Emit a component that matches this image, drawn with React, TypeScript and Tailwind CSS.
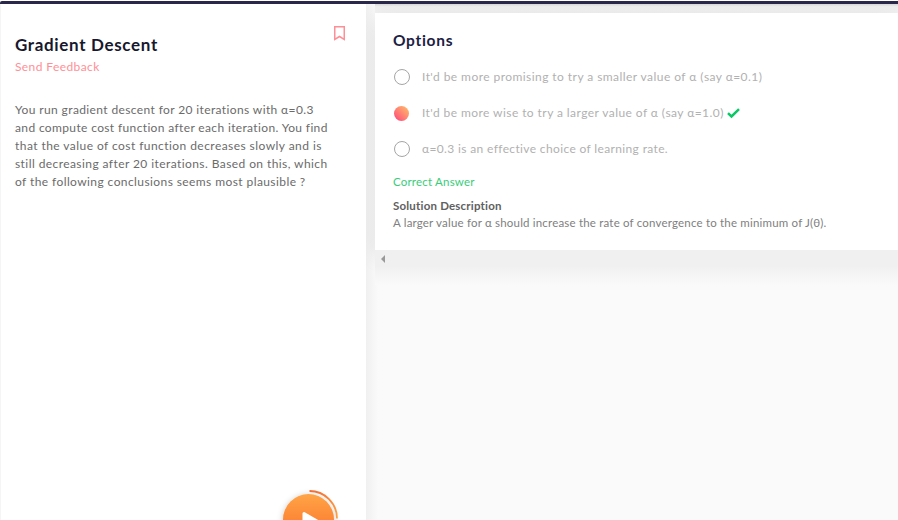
const question = [
  { text: 'You run gradient descent for 20 iterations with α=0.3', tracking: 'tracking-[0.38px]' },
  { text: 'and compute cost function after each iteration. You find', tracking: 'tracking-[0.36px]' },
  { text: 'that the value of cost function decreases slowly and is', tracking: 'tracking-[0.44px]' },
  { text: 'still decreasing after 20 iterations. Based on this, which', tracking: 'tracking-[0.42px]' },
  { text: 'of the following conclusions seems most plausible ?', tracking: 'tracking-[0.41px]' },
];

const options = [
  { text: "It'd be more promising to try a smaller value of α (say α=0.1)", selected: false, tracking: 'tracking-[0.44px]' },
  { text: "It'd be more wise to try a larger value of α (say α=1.0)", selected: true, tracking: 'tracking-[0.43px]' },
  { text: 'α=0.3 is an effective choice of learning rate.', selected: false, tracking: 'tracking-[0.36px]' },
];

function Radio({ selected }: { selected: boolean }) {
  return selected ? (
    <span className="mr-px h-[15px] w-[15px] rounded-full bg-linear-to-tr from-[#ff2f78] to-[#ffbf65]" />
  ) : (
    <span className="h-4 w-4 rounded-full border border-[#a5a5a5]" />
  );
}

function PlayButton() {
  return (
    <div className="absolute bottom-0 left-[273px] z-30 h-[40px] w-[76px] overflow-hidden">
      <svg width="76" height="80" viewBox="0 0 76 80" fill="none">
        <defs>
          <linearGradient id="play" x1="0" y1="0" x2="0" y2="1">
            <stop stopColor="#ffa447" />
            <stop offset="1" stopColor="#fb6b25" />
          </linearGradient>
          <linearGradient id="arc" x1="0" y1="0" x2="1" y2="1">
            <stop stopColor="#f26b35" />
            <stop offset="1" stopColor="#ffa040" />
          </linearGradient>
          <filter id="shadow" x="-30%" y="-30%" width="160%" height="160%">
            <feDropShadow dx="0" dy="1" stdDeviation="3" floodOpacity="0.22" />
          </filter>
        </defs>
        <circle cx="35.5" cy="39.5" r="25.5" fill="url(#play)" filter="url(#shadow)" />
        <path d="M36.5 11A27.5 27.5 0 0 1 64 38.5" stroke="url(#arc)" strokeWidth="1.8" />
        <path d="M31 33.5L44 41L31 48.5Z" fill="white" stroke="white" strokeWidth="3" strokeLinejoin="round" />
      </svg>
    </div>
  );
}

export default function App() {
  return (
    <div className="relative flex h-[520px] w-[898px] flex-col overflow-hidden bg-white font-[Lato,'Liberation_Sans',sans-serif]">
      <div className="z-30 mt-px h-[3px] shrink-0 rounded-tl-xs bg-[#29284a]" />
      <main className="flex flex-1">
        <section className="z-20 w-[366px] shrink-0 border-l border-[#f5f5f5] bg-white pl-[14px]">
          <div className="flex h-[84px] justify-between pr-[20px] pt-[22px]">
            <div>
              <h1 className="h-[30px] text-[17px] font-bold leading-[38px] tracking-[0.66px] text-[#17182d]">Gradient Descent</h1>
              <a className="block text-[12px] leading-[22px] tracking-[0.4px] text-[#ff8f96]">Send Feedback</a>
            </div>
            <svg className="block" width="13" height="16" viewBox="0 0 13 16" fill="none">
              <path d="M1.75 .75H11.25V13.5L6.5 10.5L1.75 13.5Z" stroke="#ff8f96" strokeWidth="1.5" />
            </svg>
          </div>
          <div className="pt-[13px] text-[12px] leading-[18px] text-[#6b6b6b]">
            {question.map((line) => (
              <p key={line.text} className={`whitespace-nowrap ${line.tracking}`}>{line.text}</p>
            ))}
          </div>
        </section>
        <section className="flex flex-1 flex-col bg-linear-to-r from-[#f0f0f0] to-[#fafafa] to-[12px] pl-[9px]">
          <div className="h-[9px] shrink-0 bg-linear-to-b from-[#d8d8d8] via-[#efefef] via-30% to-[#f2f2f2]" />
          <div className="h-[237px] shrink-0 bg-white pl-[18px] shadow-[0_6px_20px_rgba(0,0,0,0.1)]">
            <h2 className="pt-[16px] text-[15.5px] font-bold leading-[22px] tracking-[0.7px] text-[#1c2143]">Options</h2>
            <div className="pt-[8px]">
              {options.map((o) => (
                <div key={o.text} className="flex h-9 items-center">
                  <span className="flex w-[18px] justify-center"><Radio selected={o.selected} /></span>
                  <span className={`ml-[11px] whitespace-nowrap text-[12px] leading-[18px] text-[#b1b1b1] ${o.tracking}`}>{o.text}</span>
                  {o.selected && (
                    <svg className="ml-[3px]" width="13" height="11" viewBox="0 0 13 11" fill="none">
                      <path d="M1 5.2L4.5 8.5L12 1.2" stroke="#09c865" strokeWidth="2.5" />
                    </svg>
                  )}
                </div>
              ))}
            </div>
            <p className="pt-[6px] text-[11.5px] leading-[18px] tracking-[0.2px] text-[#38cd78]">Correct Answer</p>
            <h3 className="pt-[6px] text-[11.5px] font-bold leading-[18px] tracking-[0.2px] text-[#606060]">Solution Description</h3>
            <p className="whitespace-nowrap text-[11.5px] leading-[16px] tracking-[0.19px] text-[#808080]">A larger value for α should increase the rate of convergence to the minimum of J(θ).</p>
          </div>
          <div className="z-10 flex h-[17px] shrink-0 items-center bg-[#f0f0f0] pl-[6px]">
            <span className="border-y-[4px] border-r-[4px] border-y-transparent border-r-[#999]" />
          </div>
          <div className="h-[18px] shrink-0 bg-linear-to-b from-[#f1f1f1] to-[#fafafa]" />
        </section>
      </main>
      <PlayButton />
    </div>
  );
}
